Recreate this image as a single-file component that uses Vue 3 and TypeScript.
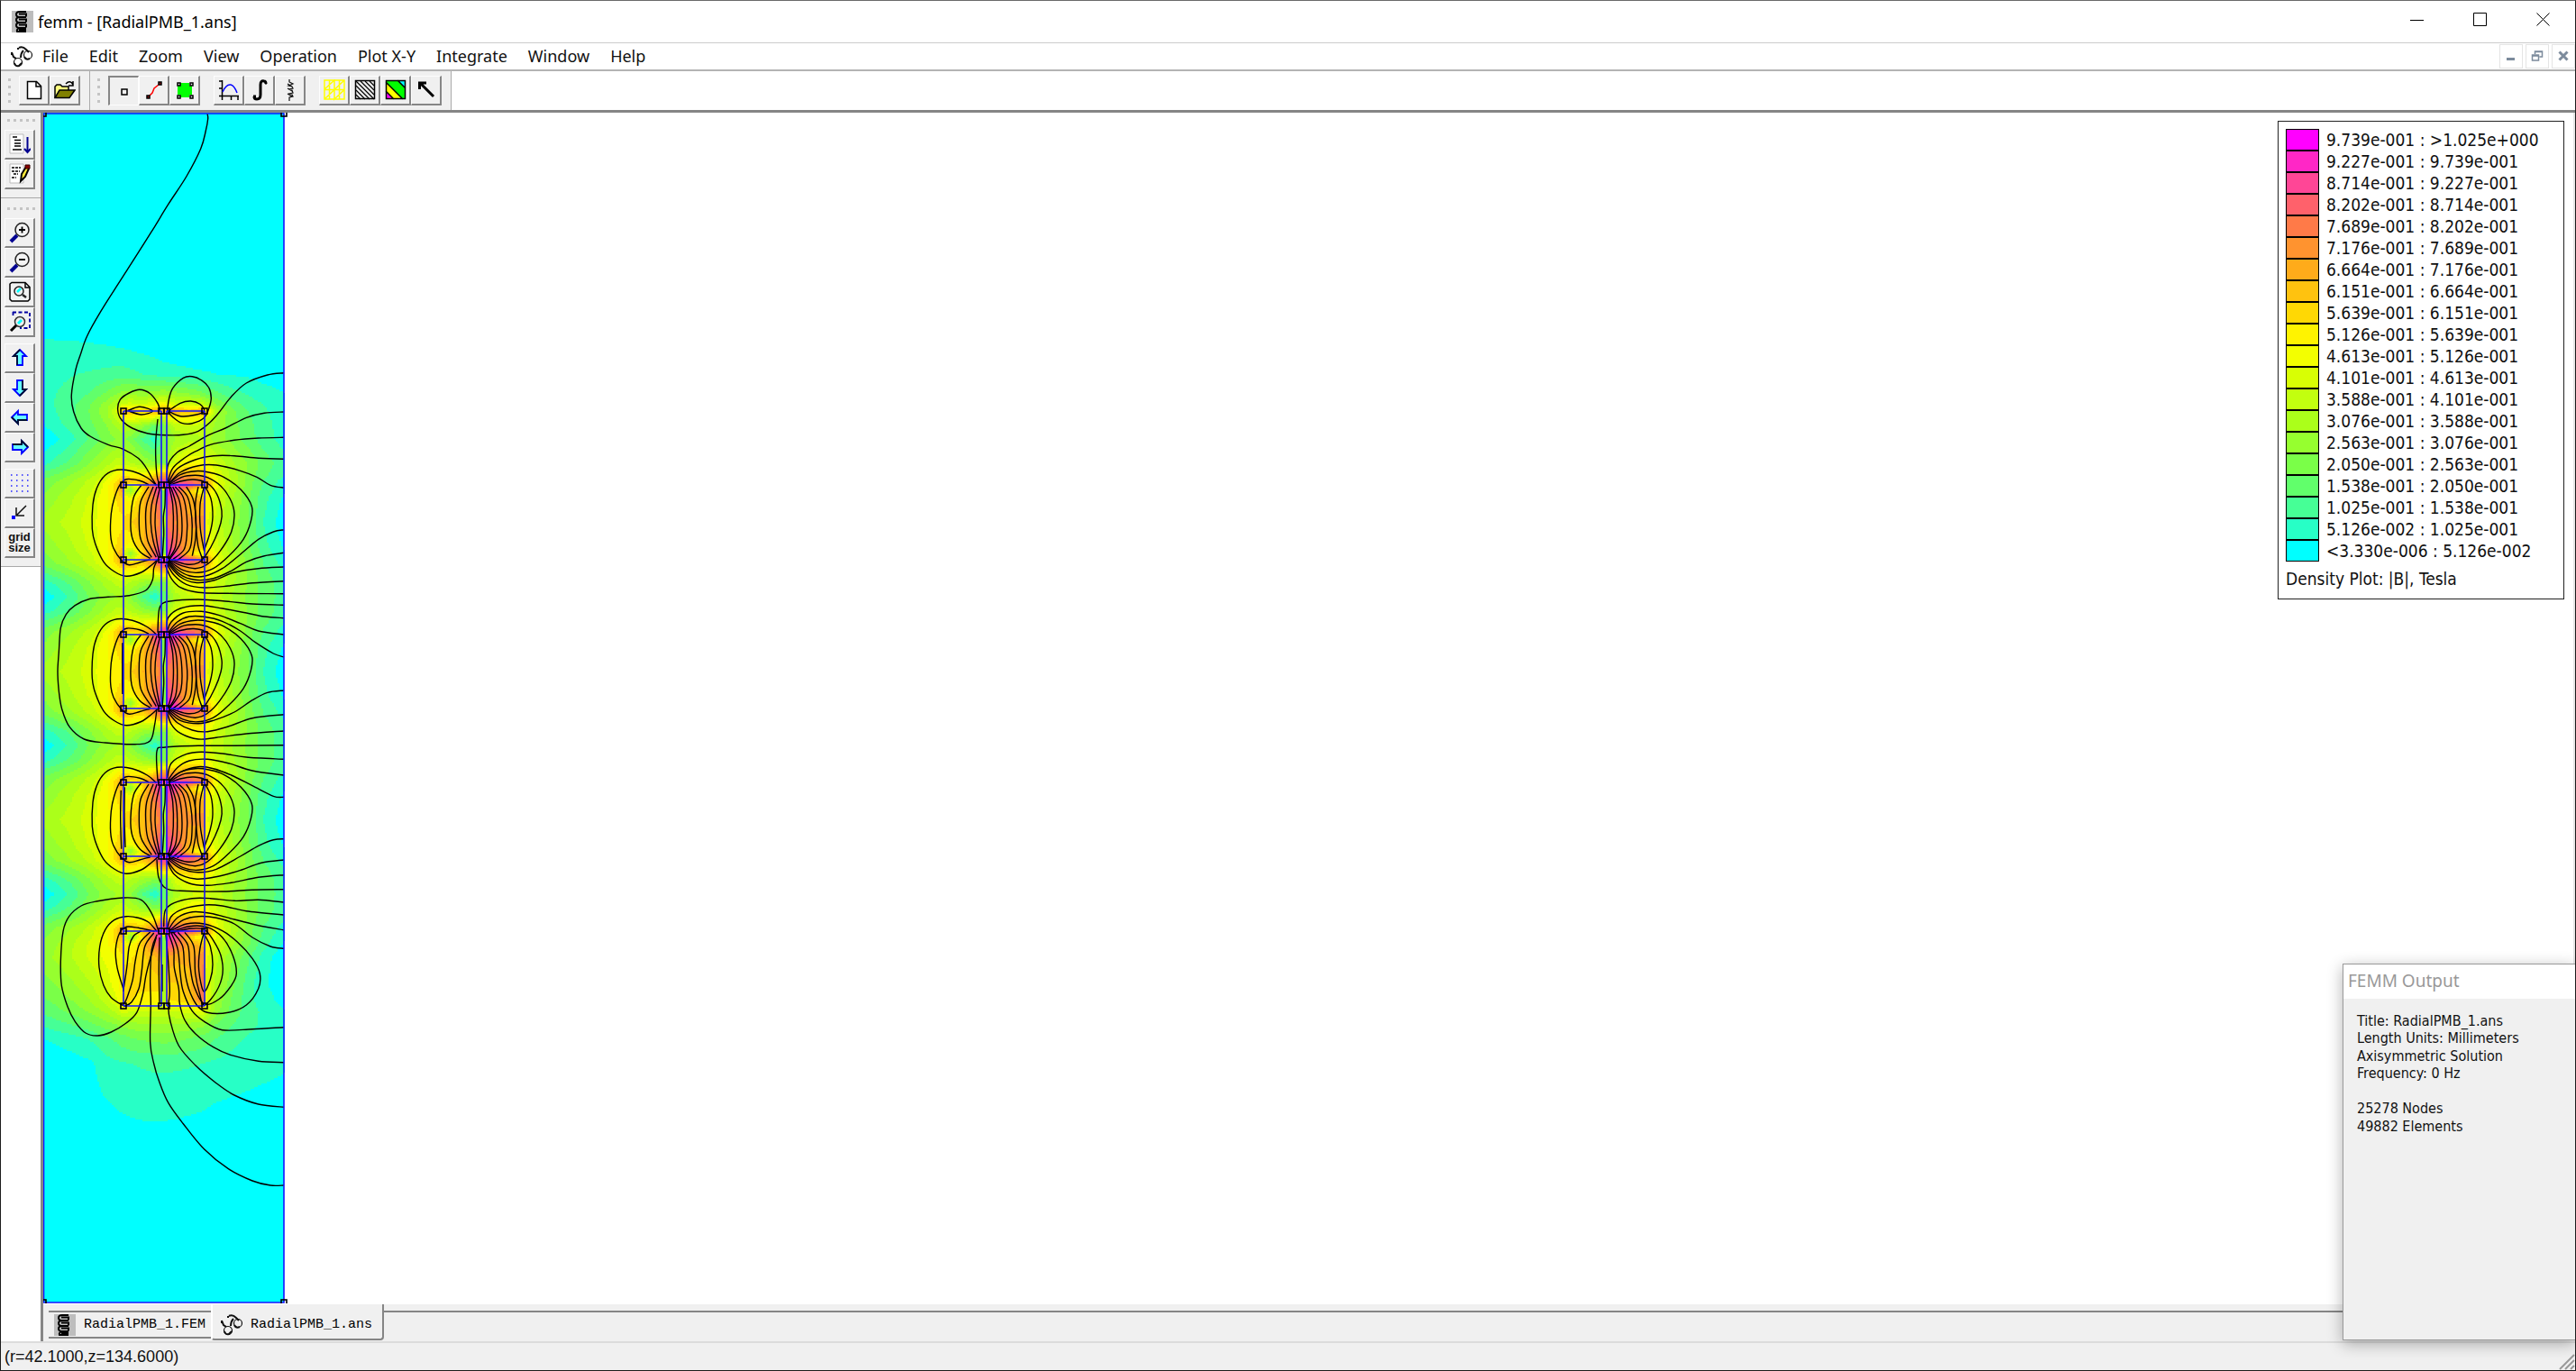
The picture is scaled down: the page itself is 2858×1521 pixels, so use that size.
<script setup lang="ts">
type Point = [number, number]

const menus = ['File', 'Edit', 'Zoom', 'View', 'Operation', 'Plot X-Y', 'Integrate', 'Window', 'Help']

const palette = [
  '#00ffff', '#27ffc6', '#46ff96', '#61ff6b', '#7aff48', '#96ff2f', '#abff1a', '#c2ff0f', '#d8ff04', '#f3ff00',
  '#fff300', '#ffd804', '#ffc20f', '#ffab1a', '#ff932f', '#ff7a48', '#ff616b', '#ff4696', '#ff27c6', '#ff00ff',
]

const ranges = [
  '9.739e-001 : >1.025e+000', '9.227e-001 : 9.739e-001', '8.714e-001 : 9.227e-001', '8.202e-001 : 8.714e-001',
  '7.689e-001 : 8.202e-001', '7.176e-001 : 7.689e-001', '6.664e-001 : 7.176e-001', '6.151e-001 : 6.664e-001',
  '5.639e-001 : 6.151e-001', '5.126e-001 : 5.639e-001', '4.613e-001 : 5.126e-001', '4.101e-001 : 4.613e-001',
  '3.588e-001 : 4.101e-001', '3.076e-001 : 3.588e-001', '2.563e-001 : 3.076e-001', '2.050e-001 : 2.563e-001',
  '1.538e-001 : 2.050e-001', '1.025e-001 : 1.538e-001', '5.126e-002 : 1.025e-001', '<3.330e-006 : 5.126e-002',
]
const legend = ranges.map((text, i) => ({ text, color: palette[19 - i] }))

const output = [
  'Title: RadialPMB_1.ans', 'Length Units: Millimeters', 'Axisymmetric Solution', 'Frequency: 0 Hz', '\u00a0',
  '25278 Nodes', '49882 Elements',
]

/* ---- Flux density: sampled band levels, interpolated between the samples ---- */
const xs = [48, 60, 80, 100, 118, 130, 136, 138, 145, 158, 172, 178, 179, 184, 185, 195, 210, 226, 228, 240, 258, 275, 292, 316]
type Row = [number, number[]]

const aboveRows: Row[] = [
  [-41, [0.3, 1.0, 2.4, 4.2, 5.5, 6, 6, 6, 5, 3, 1.2, 2.5, 3.5, 3.5, 4.5, 6.5, 7.8, 8.3, 8.2, 7.6, 6, 4.8, 3.6, 2.5]],
  [-25, [1.6, 2.2, 3.4, 5, 6.5, 7.5, 7.6, 7.6, 7, 6, 5, 5, 5, 5, 6, 8.5, 10, 10, 9.5, 8, 6.2, 4.9, 3.6, 2.4]],
  [-12, [3.4, 3.9, 5, 6.4, 8.1, 9.8, 10.5, 10.5, 10.3, 9.8, 11, 13, 13, 13, 13, 12.8, 13.2, 12, 11.5, 9, 6.5, 4.8, 3.3, 2]],
  [-4, [4.3, 4.9, 6, 7.4, 9.2, 11.5, 13.5, 13.5, 12.5, 12, 15, 18, 18, 18, 18, 17, 16.2, 15.5, 14, 9.4, 6.6, 4.6, 2.9, 1.5]],
]
const insideRows: Row[] = [
  [0, [4.5, 5.1, 6.2, 7.5, 9.4, 12, 15.5, 12, 8, 12, 17, 19.5, 18, 18, 19.5, 19, 17, 14, 15, 9.4, 6.6, 4.6, 2.9, 1.4]],
  [6, [4.8, 5.4, 6.5, 7.8, 9.6, 12, 13.5, 8, 5, 11, 16.5, 19, 5, 5, 19, 17.5, 12, 8.5, 12, 8.9, 6.4, 4.4, 2.7, 1.1]],
  [14, [5.2, 5.8, 6.9, 8.2, 9.8, 11.2, 12, 10, 9.6, 12.3, 15.6, 17.2, 4, 4, 18, 16, 13.5, 12.5, 10.4, 8.4, 6.1, 4.2, 2.4, 0.8]],
  [41, [6.3, 6.8, 7.5, 8.6, 9.7, 10.4, 10.6, 11.4, 11.9, 12.9, 14.3, 15.2, 6.5, 6.5, 15.6, 14.9, 14.1, 14.6, 9.3, 7.6, 5.6, 4, 2, 0.2]],
]
const mirror = (rows: Row[]): Row[] => [...rows].reverse().map(([y, v]): Row => [82 - y, v])
const cell = [...aboveRows, ...insideRows, ...mirror(insideRows).slice(1), ...mirror(aboveRows)]
const place = (rows: Row[], top: number): Row[] => rows.map(([y, v]): Row => [y + top, v])
const flat = (n: number) => xs.map(() => n)

const rows: Row[] = [
  [120, flat(0)],
  [355, flat(0)],
  [377, [1.02, 1, 0.97, 0.9, 0.75, 0.6, 0.5, 0.5, 0.4, 0.3, 0.2, 0.2, 0.2, 0.2, 0.2, 0.2, 0.1, 0, 0, 0, 0, 0, 0, 0]],
  [415, [1.7, 1.8, 1.95, 2.1, 2.3, 2.4, 2.4, 2.4, 2.3, 2, 1.7, 1.5, 1.5, 1.4, 1.4, 1.3, 1.2, 1.1, 1.1, 1, 0.9, 0.8, 0.6, 0.5]],
  [437, [1.8, 1.95, 2.3, 3.1, 4.2, 5, 5.4, 5.4, 5.6, 5.5, 5.5, 5.8, 5.8, 5.8, 5.7, 5.4, 5, 4.2, 4, 3.3, 2.4, 1.9, 1.4, 1]],
  [449, [1.6, 2, 2.7, 4, 5.5, 7, 8.3, 8.5, 8.5, 8, 9, 10, 10, 10, 9.5, 8.5, 8.3, 7.5, 7, 5, 3.6, 2.6, 2, 1.2]],
  [456, [1.4, 1.9, 2.8, 4.1, 5.7, 8.5, 13, 14, 12, 11.5, 13, 15, 14, 14, 15, 13.5, 12.5, 14, 12, 6.4, 4.2, 3, 2.2, 1.3]],
  [463, [1.2, 1.7, 2.7, 4, 5.5, 7.5, 9.5, 10, 10, 9.5, 9, 7.5, 7.5, 8, 10, 10.5, 10.5, 10, 8.5, 6, 4.3, 3.2, 2.3, 1.4]],
  [472, [0.9, 1.5, 2.5, 3.7, 5, 6.3, 6.9, 6.9, 6.6, 5.5, 3.8, 4, 4.5, 4.8, 5.5, 7.5, 8, 7.6, 7, 5.7, 4.4, 3.4, 2.4, 1.5]],
  [487, [0.2, 0.7, 1.7, 3.2, 4.4, 5.1, 5.3, 5.3, 4.5, 2.8, 1.2, 2.6, 4, 4, 4.6, 6, 6.6, 6.8, 6.4, 5.6, 4.6, 3.5, 2.5, 1.5]],
  ...place(cell.slice(1), 538.5),
  ...place(cell, 704),
  ...place(cell, 868.5),
  ...place([...aboveRows, ...insideRows.slice(0, 3)], 1033.5),
  [1062, [5.6, 6.1, 7, 8.2, 9.3, 10.2, 10.8, 10.8, 10.9, 11.6, 12.8, 13.6, 6, 6, 14, 13.2, 13.3, 15, 9.3, 7.3, 5, 3.2, 1.6, 0.1]],
  [1090, [4.6, 5, 5.9, 7, 8.4, 9.8, 10.6, 11.4, 11.4, 11.4, 11.5, 11.5, 6.5, 6.5, 12, 12, 12.7, 15.4, 9, 6.6, 4.3, 2.6, 1.2, 0.2]],
  [1110, [3.8, 4.2, 5, 6, 7.5, 9, 10.6, 12, 11, 10.6, 10.5, 10.3, 7, 7, 11, 11.2, 12, 16, 9.6, 5.8, 3.8, 2.4, 1.5, 0.6]],
  [1122, [3.2, 3.6, 4.3, 5.2, 6.2, 7.4, 8.4, 8.4, 8, 7.9, 7.8, 7.8, 7.8, 7.8, 7.8, 8, 8.4, 9, 8, 5.3, 3.6, 2.5, 1.8, 1]],
  [1137, [2.2, 2.5, 3, 3.7, 4.5, 5, 5.3, 5.3, 5.6, 5.8, 5.9, 5.9, 5.9, 5.9, 5.9, 5.9, 5.7, 5.2, 5, 3.9, 3, 2.3, 1.8, 1.4]],
  [1152, [1, 1.2, 1.6, 2.1, 2.8, 3.3, 3.6, 3.6, 3.9, 4.2, 4.3, 4.4, 4.4, 4.4, 4.4, 4.3, 4, 3.6, 3.5, 3, 2.3, 1.9, 1.7, 1.5]],
  [1180, [0, 0.2, 0.5, 0.8, 1.6, 1.8, 1.9, 1.9, 2, 2.1, 2.2, 2.2, 2.2, 2.2, 2.2, 2.2, 2.1, 2, 1.9, 1.8, 1.6, 1.4, 1.3, 1.1]],
  [1210, [0, 0.1, 0.3, 0.6, 1.2, 1.4, 1.5, 1.5, 1.5, 1.6, 1.6, 1.6, 1.6, 1.6, 1.6, 1.5, 1.5, 1.4, 1.3, 1.2, 1.1, 1, 0.9, 0.8]],
  [1243, [0, 0, 0.1, 0.3, 0.5, 0.8, 0.85, 0.85, 0.95, 1, 1.01, 1.01, 1.01, 1.01, 1, 0.98, 0.9, 0.8, 0.8, 0.7, 0.6, 0.5, 0.4, 0.3]],
  [1262, flat(0)],
  [1460, flat(0)],
]

function find(list: number[], v: number): [number, number] {
  let i = 0
  while (i < list.length - 2 && v >= list[i + 1]) i++
  return [i, (v - list[i]) / (list[i + 1] - list[i])]
}

const bands = (() => {
  const step = 2
  const paths = palette.map(() => '')
  const ys = rows.map((r) => r[0])
  const lookup: [number, number][] = []
  for (let x = 48; x < 315; x += step) lookup.push(find(xs, x + 1))
  for (let y = 126; y < 1445; y += step) {
    const [j, ty] = find(ys, y + 1)
    let start = 0
    let previous = -1
    for (let k = 0; k <= lookup.length; k++) {
      let band = -2
      if (k < lookup.length) {
        const [i, tx] = lookup[k]
        const a = rows[j][1][i] * (1 - tx) + rows[j][1][i + 1] * tx
        const b = rows[j + 1][1][i] * (1 - tx) + rows[j + 1][1][i + 1] * tx
        band = Math.max(0, Math.min(19, Math.floor(a * (1 - ty) + b * ty)))
      }
      if (band !== previous) {
        if (previous > 0) paths[previous] += `M${48 + start * step} ${y}h${(k - start) * step}v2h-${(k - start) * step}z`
        start = k
        previous = band
      }
    }
  }
  return paths.map((d, i) => ({ d, color: palette[i] })).filter((b) => b.d)
})()

/* ---- Flux lines: polylines at three units per pixel, from a top offset ---- */
function parse(text: string): Point[] {
  return text.split(' ').map((pair) => pair.split(',').map(Number) as Point)
}
function curve(text: string, top: number): string {
  const p = parse(text).map(([x, y]): Point => [40 + x / 3, top + y / 3])
  let d = `M${p[0][0].toFixed(1)} ${p[0][1].toFixed(1)}`
  for (let i = 0; i < p.length - 1; i++) {
    const a = p[Math.max(0, i - 1)]
    const b = p[i]
    const c = p[i + 1]
    const e = p[Math.min(p.length - 1, i + 2)]
    const n = [b[0] + (c[0] - a[0]) / 6, b[1] + (c[1] - a[1]) / 6, c[0] - (e[0] - b[0]) / 6, c[1] - (e[1] - b[1]) / 6, c[0], c[1]]
    d += 'C' + n.map((v) => v.toFixed(1)).join(' ')
  }
  return d
}

const magnetLines = [
  '400,535 370,510 320,488 270,484 230,502 202,545 189,600 187,680 197,730 225,790 260,822 300,838 350,825 385,800 405,782',
  '375,533 345,520 300,515 278,535 260,580 250,630 248,700 258,745 285,785 310,800 345,792 380,782',
  '350,535 325,575 315,650 320,710 345,755 380,778',
  '375,540 348,590 343,660 350,720 385,775',
  '390,540 368,600 365,660 372,720 400,775',
  '402,540 385,600 382,660 390,720 407,775',
  '412,545 400,600 396,660 402,720 413,775',
  '430,545 429,600 424,640 425,700 420,780',
  '443,540 455,600 457,680 450,740 438,780',
  '448,540 466,600 470,680 464,740 442,780',
  '455,540 478,590 486,670 479,730 446,780',
  '463,540 490,575 502,640 502,700 492,750 455,782',
  '475,540 505,575 518,640 519,700 510,750 470,785',
  '500,540 522,580 532,640 531,710 520,770',
  '540,540 530,600 534,690 540,740 552,775',
  '558,545 546,600 547,680 560,755',
  '560,535 582,580 588,640 580,690 560,750',
  '445,535 480,522 525,516 570,528 602,565 618,620 615,660 595,715 565,768 540,793 500,798 450,782',
  '443,533 485,508 530,502 570,509 615,538 647,583 660,630 650,690 612,755 570,798 530,812 485,803 445,784',
  '441,531 480,500 530,488 575,492 625,508 682,550 718,605 715,655 690,715 640,772 590,812 540,826 490,818 443,786',
]

const traces: [number, string[]][] = [
  [120, ['570,18 572,35 565,75 548,135 500,228 440,320 385,410 328,500 272,587 215,677 170,758 148,820 132,870 118,955 125,1010 150,1065 180,1092 240,1120 290,1135 340,1165 365,1195 385,1230 400,1255']],
  [360, [
    '412,285 405,262 380,230 345,217 310,228 280,250 272,285 285,318 320,345 370,362 430,368 490,367 540,355 580,325 610,292 650,240 700,195 770,168 825,161',
    '437,288 442,250 455,212 490,178 520,173 550,185 575,210 583,245 575,280 560,310 520,329 485,328 455,308 437,288',
    '305,287 345,274 388,288 350,300 305,287',
    '440,288 480,262 515,255 545,265 560,288 530,301 480,305 440,288',
    '405,315 398,400 402,500 412,535',
    '435,520 440,465 470,425 510,405 570,370 630,345 700,310 760,295 825,291',
    '438,525 455,478 500,440 540,418 580,400 660,385 740,378 825,376',
    '440,528 470,480 530,450 590,437 660,437 740,445 825,448',
    '442,530 480,492 540,470 600,468 680,487 735,508 780,535 825,543',
    '440,785 470,815 510,836 560,838 620,812 680,765 740,715 790,690 825,683',
    '438,788 480,832 530,850 590,845 650,820 700,790 760,770 825,760',
  ]],
  [630, [
    '436,-18 480,30 530,49 590,42 660,15 740,2 825,-3',
    '436,-12 460,25 500,55 560,66 640,60 720,50 825,44',
    '430,-10 450,35 480,65 540,82 640,85 825,86',
    '405,215 408,150 415,125 440,112 540,105 640,112 720,120 825,124',
    '435,205 440,165 480,135 550,125 620,135 700,150 760,162 825,167',
    '437,210 450,180 490,150 550,145 610,158 680,185 740,210 825,222',
    '440,215 470,180 510,162 560,163 620,178 680,210 730,248 790,285 825,297',
    '405,-28 392,0 388,40 365,75 310,92 240,97 180,103 130,125 100,155 82,200 76,280 72,345 76,410 86,470 112,530 160,570 230,582 330,587 380,575 395,520 402,470',
    '288,250 287,335 288,420',
    '289,250 289,335 289,420',
    '440,475 480,508 540,518 590,508 660,480 720,440 770,415 825,408',
    '438,478 470,515 520,540 570,545 640,528 720,500 825,488',
    '436,480 450,520 480,550 540,570 600,565 700,552 825,543',
    '405,710 402,610 430,597 540,592 660,592 825,590',
    '437,700 450,650 500,620 550,613 620,618 700,630 825,637',
    '440,705 470,665 510,642 570,637 640,650 720,675 825,690',
  ]],
  [840, [
    '442,80 480,50 540,32 590,38 650,60 720,95 790,130 825,133',
    '283,110 281,200 284,305', '295,100 294,200 297,300',
    '440,340 480,370 540,383 600,373 680,330 740,295 790,275 825,272',
    '438,345 470,385 530,405 590,400 670,380 750,352 825,342',
    '437,348 460,390 510,420 570,427 650,418 740,400 825,392',
    '402,340 408,400 430,435 480,445 620,447 720,442 825,440',
    '425,565 430,510 460,485 520,470 580,470 660,478 740,475 825,483',
    '437,570 450,530 490,505 560,492 620,495 700,512 825,525',
    '440,575 470,535 520,515 580,520 660,540 740,560 825,575',
    '408,580 385,520 350,475 290,468 200,480 150,495 110,530 90,580 82,680 85,760 105,830 130,880 165,918 205,927 250,915 300,885 335,850 355,790 365,730 380,670 400,600',
  ]],
  [1000, [
    '443,98 490,62 540,50 600,55 660,75 720,120 780,150 825,157',
    '402,100 375,70 340,55 300,50 260,62 230,95 212,150 210,220 225,280 250,320 290,347',
    '395,100 340,88 300,85 278,105 265,160 270,220 290,290',
    '350,98 325,115 310,150 302,220 290,300',
    '380,102 345,140 330,200 322,260 303,320 290,347',
    '392,105 362,150 352,230 342,290 318,335 292,350',
    '403,110 385,160 380,260 382,340 380,470 392,540 410,600 440,670 490,740 560,825 640,890 720,930 780,945 825,945',
    '411,120 409,230 411,340', '420,210 420,300',
    '432,110 440,200 445,300 440,350 447,400 475,480 530,545 600,605 660,645 740,675 825,685',
    '442,110 458,160 460,220 475,290 478,340 495,395 530,440 590,485 650,512 740,532 825,536',
    '450,105 472,160 480,240 490,300 520,365 560,400 620,428 720,425 825,419',
    '458,105 488,150 495,230 508,290 535,345 570,370 640,370 700,345 740,290 745,240 720,190 670,135 620,98 560,75 500,75 445,100',
    '472,103 505,145 512,210 525,280 560,342 610,325 650,280 667,240 655,180 620,120 570,86 510,83 447,103',
    '495,103 525,150 530,240 545,310 560,345 600,300 621,240 615,180 590,130 560,94 510,91 450,105',
    '560,100 545,160 542,230 558,300 580,260 588,210 580,150 560,110',
  ]],
]

const fluxLines = [
  ...traces.flatMap(([top, list]) => list.map((t) => curve(t, top))),
  ...[360, 525.5, 690].flatMap((top) => magnetLines.map((t) => curve(t, top))),
]

const levelsY = [456, 538, 621, 704, 786, 868, 950, 1033, 1116]
const columnsX = [137, 179, 185, 227]
const nodes: Point[] = [
  ...levelsY.flatMap((y) => columnsX.map((x): Point => [x, y])),
  [48, 126], [315, 126], [48, 1445], [315, 1445],
]
</script>

<template>
  <div class="app">
    <header class="titlebar">
      <svg class="icon coil" viewBox="0 0 24 24" aria-hidden="true">
        <path d="M0 0h24v24H0z" fill="#bdbdbd" />
        <path d="M16 1H9Q5 1 5 4t4 3h7M9 7Q5 7 5 10t4 3h7M9 13Q5 13 5 16t4 3h7M9 19q-4 1-3 4h10M8 3.500h8v3M8 9.500h8v3M8 15.500h8v3M8 21h8" fill="none" stroke="#000" stroke-width="2" />
      </svg>
      <h1>femm - [RadialPMB_1.ans]</h1>
      <div class="window-buttons">
        <button type="button" aria-label="Minimize"><svg viewBox="0 0 16 16"><path d="M0 8.500h15" /></svg></button>
        <button type="button" aria-label="Maximize"><svg viewBox="0 0 16 16"><path d="M.5.5h14v14H.5z" /></svg></button>
        <button type="button" aria-label="Close"><svg viewBox="0 0 16 16"><path d="M.5.500l14 14m0-14l-14 14" /></svg></button>
      </div>
    </header>

    <nav class="menubar">
      <svg class="icon" viewBox="0 0 24 24" aria-hidden="true">
        <g fill="none" stroke="#111" stroke-width="2">
          <path d="M1 7l2 5 3 2M1 7v3M9 2q4-2 8 2l3 3M8 2v2M14 5q-3 3-3 8" />
          <circle cx="8" cy="18" r="4.500" stroke-width="1.200" /><circle cx="19" cy="10" r="4.500" stroke-width="1.200" />
          <path d="M4 19q1 4 5 3l3-3M15 12q2 4 6 2" />
        </g>
      </svg>
      <button v-for="m in menus" :key="m" type="button" class="menu">{{ m }}</button>
      <div class="mdi-buttons">
        <button type="button" aria-label="Minimize document"><svg viewBox="0 0 14 14"><path d="M2 10.500h9" stroke-width="3" /></svg></button>
        <button type="button" aria-label="Restore document"><svg viewBox="0 0 14 14"><path d="M1.500 6h7v6h-7zM1 7h8M4.500 5V2h8v6h-3M4 2.500h9" stroke-width="1.500" /></svg></button>
        <button type="button" aria-label="Close document"><svg viewBox="0 0 14 14"><path d="M2.500 2.500l9 9m0-9l-9 9" stroke-width="3" /></svg></button>
      </div>
    </nav>

    <div class="toolbars">
      <div class="toolbar">
        <span class="grip" />
        <div class="group">
          <button type="button" class="tool" aria-label="New"><svg viewBox="0 0 24 24"><path d="M4.500 2.500h10l5 5v14h-15z" fill="#fff" stroke="#000" stroke-width="1.500" /><path d="M14 2.500V8h5.500" fill="none" stroke="#000" stroke-width="1.500" /></svg></button>
          <button type="button" class="tool" aria-label="Open"><svg viewBox="0 0 24 24"><path d="M1 20V8l2-2h4l2 2h7v4" fill="#ffff80" stroke="#000" stroke-width="1.500" /><path d="M1 20.500L6 12h17l-6 8.500z" fill="#808000" stroke="#000" stroke-width="1.500" /><path d="M13 5q5-5 8 1m0-4v5h-5" fill="none" stroke="#000" stroke-width="1.500" /></svg></button>
        </div>
      </div>
      <div class="toolbar main-tools">
        <span class="grip" />
        <div class="group">
          <button type="button" class="tool pressed" aria-label="Point mode"><svg viewBox="0 0 24 24"><path d="M9 10h6v6H9z" fill="none" stroke="#000" stroke-width="1.500" /></svg></button>
          <button type="button" class="tool" aria-label="Contour mode"><svg viewBox="0 0 24 24"><path d="M7 18l3-3 2-5 5-4" fill="none" stroke="#f00" stroke-width="1.500" /><path d="M4 18h3v3H4zM17 3h3v3h-3z" fill="#a00" stroke="#000" stroke-width="1.500" /></svg></button>
          <button type="button" class="tool" aria-label="Area mode"><svg viewBox="0 0 24 24"><path d="M7 4h10v3h3v10h-3v3H7v-3H4V7h3z" fill="#0f0" /><path d="M4 4h3v3H4zM18 4h3v3h-3zM4 18h3v3H4zM18 18h3v3h-3z" fill="#eee" stroke="#000" stroke-width="1.500" /></svg></button>
        </div>
        <div class="group">
          <button type="button" class="tool" aria-label="Plot along contour"><svg viewBox="0 0 24 24"><path d="M4.500 1v22M1 2h4M1 10h4M1 18.500h22M14.500 19v4M22 19v4" fill="none" stroke="#000" stroke-width="1.500" /><path d="M5 14q4-9 9-8 4 1 7 9" fill="none" stroke="#00f" stroke-width="1.500" /></svg></button>
          <button type="button" class="tool" aria-label="Integrate"><svg viewBox="0 0 24 24"><path d="M19 5q0-3-2-3-4-1-4 4v11q0 5-4 5-3 0-3-3" fill="none" stroke="#000" stroke-width="3" /><path d="M18 4h2M5 19h3" fill="none" stroke="#000" stroke-width="3" /></svg></button>
          <button type="button" class="tool" aria-label="Circuit properties"><svg viewBox="0 0 24 24"><path d="M11 0v3l4 2-5 2 4 1 1 2-5 1 4 1 1 3-5 1 4 1 1 2-4 1v4M9 5l5 3M9 10l5 3M9 16l5 3" fill="none" stroke="#111" stroke-width="1.200" /></svg></button>
        </div>
        <div class="group">
          <button type="button" class="tool" aria-label="Show mesh"><svg viewBox="0 0 24 24"><path d="M1 1h22v21H1zM12 1v21M1 11.500h22M1 11L12 1v10.500L23 1M1 22l11-10.500V22l11-10.500M6.500 1v21M17.500 1v21" fill="none" stroke="#ff0" stroke-width="1.500" /></svg></button>
          <button type="button" class="tool" aria-label="Contour plot"><svg viewBox="0 0 24 24"><path d="M1.500 1.500h21v20h-21z" fill="#eee" stroke="#000" stroke-width="1.500" /><path d="M2 17l5 5M2 12l10 10M2 7l15 15M2 2l20 20M7 2l15 15M12 2l10 10M17 2l5 5" stroke="#000" stroke-width="1.200" /></svg></button>
          <button type="button" class="tool" aria-label="Density plot"><svg viewBox="0 0 24 24"><path d="M1 1h22v21H1z" fill="#0f0" /><path d="M1 3l19 19H10L1 13z" fill="#ff0" /><path d="M1 13l9 9H1z" fill="#f0f" /><path d="M14 1h9v9z" fill="#0ff" /><path d="M1.500 1.500h21v20h-21zM1 3l19 19M1 13l9 9M14 1l9 9" fill="none" stroke="#000" stroke-width="1.500" /></svg></button>
          <button type="button" class="tool" aria-label="Vector plot"><svg viewBox="0 0 24 24"><path d="M5 4l15 15M4.500 11V4H12" fill="none" stroke="#000" stroke-width="3" /></svg></button>
        </div>
      </div>
    </div>

    <main class="workspace">
      <aside class="sidebar">
        <div class="side-tools">
          <div class="side-section">
            <span class="side-grip" />
            <div class="side-group">
              <button type="button" class="tool" aria-label="Output window"><svg viewBox="0 0 24 24"><path d="M1 1h15v21H1z" fill="#fff" stroke="#bbb" /><path d="M4 4h5M6 7.500h7M6 11h7M6 14h7M4 18h10" stroke="#000" stroke-width="1.500" /><path d="M20.500 4v16M17 17l3.500 4 3.500-4" fill="none" stroke="#000090" stroke-width="2" /></svg></button>
              <button type="button" class="tool" aria-label="Lua console"><svg viewBox="0 0 24 24"><path d="M1 1h15v21H1z" fill="#fff" stroke="#bbb" /><path d="M3 5h10M3 9h9M5 12h5M3 16h5" stroke="#000" stroke-width="1.500" stroke-dasharray="3 1" /><path d="M13 20l1-8 5-8 3 2-4 9z" fill="#ffeb3b" stroke="#000" stroke-width="2" /><path d="M18 2h5v4h-5z" fill="#8b0000" stroke="#300" /></svg></button>
            </div>
          </div>
          <div class="side-section">
            <span class="side-grip" />
            <div class="side-group">
              <button type="button" class="tool" aria-label="Zoom in"><svg viewBox="0 0 24 24"><path d="M2 22l7-7" stroke="#000090" stroke-width="4" /><circle cx="14.500" cy="9" r="7.500" fill="#f4f4f4" stroke="#222" stroke-width="1.500" /><path d="M11 9h7M14.500 5.500v7" stroke="#000" stroke-width="1.800" /></svg></button>
              <button type="button" class="tool" aria-label="Zoom out"><svg viewBox="0 0 24 24"><path d="M2 22l7-7" stroke="#000090" stroke-width="4" /><circle cx="14.500" cy="9" r="7.500" fill="#f4f4f4" stroke="#222" stroke-width="1.500" /><path d="M11 9h7" stroke="#000" stroke-width="1.800" /></svg></button>
              <button type="button" class="tool" aria-label="Natural zoom"><svg viewBox="0 0 24 24"><path d="M3 1.500h15l5 5V20l-2 2H3l-2-2V3z" fill="#f2f2f2" stroke="#000" stroke-width="1.500" /><path d="M18 2v5h5" fill="none" stroke="#000" stroke-width="1.500" /><circle cx="11" cy="11" r="5" fill="#eee" stroke="#222" stroke-width="1.500" /><path d="M9 12l4-4" stroke="#0ff" stroke-width="2.500" /><path d="M15 15l4 3" stroke="#222" stroke-width="2.500" /></svg></button>
              <button type="button" class="tool" aria-label="Zoom window"><svg viewBox="0 0 24 24"><path d="M4 1.500h19V19H12M4.500 1v5" fill="none" stroke="#0000a0" stroke-width="1.800" stroke-dasharray="4 2.500" /><circle cx="12" cy="12" r="5.500" fill="#eee" stroke="#333" stroke-width="1.500" /><path d="M10 14l4-4" stroke="#0ff" stroke-width="3" /><path d="M2 22l6-6" stroke="#000" stroke-width="3" /></svg></button>
            </div>
            <div class="side-group">
              <button v-for="(turn, name) in { up: 0, down: 180, left: 270, right: 90 }" :key="name" type="button" class="tool" :aria-label="'Pan ' + name">
                <svg viewBox="0 0 24 24"><g :transform="`rotate(${turn} 12 12)`"><path d="M12 3l7 7h-4v10H9V10H5z" fill="#6ff" stroke="#00f" stroke-width="1.800" /><path d="M12 3l-7 7h4v10" fill="none" stroke="#001030" stroke-width="1.800" /></g></svg>
              </button>
            </div>
            <div class="side-group">
              <button type="button" class="tool" aria-label="Show grid"><svg viewBox="0 0 24 24"><path d="M2 3h20M2 9h20M2 15h20M2 21h20" stroke="#22f" stroke-width="1.500" stroke-dasharray="1.500 4.500" /></svg></button>
              <button type="button" class="tool" aria-label="Snap to grid"><svg viewBox="0 0 24 24"><path d="M19 4L9 14M8 6v9h9" fill="none" stroke="#111" stroke-width="1.500" /><path d="M3 15h4v4H3z" fill="#00f" /></svg></button>
              <button type="button" class="tool grid-size">grid<br />size</button>
            </div>
          </div>
        </div>
      </aside>

      <section class="document">
        <div class="view">
          <svg class="plot" viewBox="48 125 272 1321" role="img" aria-label="Flux density plot">
            <path d="M48 125h267v1320H48z" fill="#0ff" />
            <g shape-rendering="crispEdges">
              <path v-for="b in bands" :key="b.color" :d="b.d" :fill="b.color" />
            </g>
            <g class="flux"><path v-for="(d, i) in fluxLines" :key="i" :d="d" /></g>
            <g class="geometry">
              <path d="M48.500 126H315V1445H48.500z" />
              <path v-for="x in columnsX" :key="x" :d="`M${x} 456V1116`" />
              <path v-for="y in levelsY" :key="y" :d="`M137 ${y}h42M185 ${y}h42`" />
            </g>
            <g class="nodes"><rect v-for="([x, y], i) in nodes" :key="i" :x="x - 3" :y="y - 3" width="6" height="6" /></g>
          </svg>
          <div class="legend">
            <ul>
              <li v-for="row in legend" :key="row.text">
                <span class="swatch" :style="{ background: row.color }" />{{ row.text }}
              </li>
            </ul>
            <p>Density Plot: |B|, Tesla</p>
          </div>
        </div>
        <div class="tabs">
          <button type="button" class="tab">
            <svg class="icon" viewBox="0 0 24 24" aria-hidden="true">
              <path d="M0 0h24v24H0z" fill="#bdbdbd" />
              <path d="M16 1H9Q5 1 5 4t4 3h7M9 7Q5 7 5 10t4 3h7M9 13Q5 13 5 16t4 3h7M9 19q-4 1-3 4h10M8 3.500h8v3M8 9.500h8v3M8 15.500h8v3M8 21h8" fill="none" stroke="#000" stroke-width="2" />
            </svg>
            RadialPMB_1.FEM
          </button>
          <button type="button" class="tab current">
            <svg class="icon" viewBox="0 0 24 24" aria-hidden="true">
              <g fill="none" stroke="#111" stroke-width="2">
                <path d="M1 7l2 5 3 2M1 7v3M9 2q4-2 8 2l3 3M8 2v2M14 5q-3 3-3 8" />
                <circle cx="8" cy="18" r="4.500" stroke-width="1.200" /><circle cx="19" cy="10" r="4.500" stroke-width="1.200" />
                <path d="M4 19q1 4 5 3l3-3M15 12q2 4 6 2" />
              </g>
            </svg>
            RadialPMB_1.ans
          </button>
          <span class="tab-rest" />
        </div>
      </section>
    </main>

    <footer class="statusbar">
      <span>(r=42.1000,z=134.6000)</span>
      <svg viewBox="0 0 18 18" aria-hidden="true"><path d="M1 17L17 1M7 17L17 7M13 17l4-4" stroke="#999" stroke-width="2" /></svg>
    </footer>

    <aside class="output">
      <h2>FEMM Output</h2>
      <div class="output-text"><p v-for="(line, i) in output" :key="i">{{ line }}</p></div>
    </aside>
  </div>
</template>

<style>
body {
  margin: 0;
}
</style>

<style scoped>
.app {
  position: relative;
  box-sizing: border-box;
  display: flex;
  flex-direction: column;
  min-height: 100vh;
  overflow: hidden;
  border: 1px solid #1c1c1c;
  border-top-color: #6a6a6a;
  background: #fff;
  color: #111;
  font-family: 'Noto Sans', 'Open Sans', sans-serif;
}
button {
  margin: 0;
  padding: 0;
  border: 0;
  background: none;
  color: inherit;
  font: inherit;
}
h1, h2, p, ul {
  margin: 0;
  padding: 0;
  font-weight: 400;
}
.icon {
  width: 24px;
  height: 24px;
  flex: none;
}
.titlebar {
  display: flex;
  align-items: center;
  height: 46px;
  padding-left: 12px;
  border-bottom: 1px solid #ccc;
}
.titlebar h1 {
  margin-left: 5px;
  font-size: 18px;
  line-height: 28px;
  color: #000;
}
.window-buttons {
  display: flex;
  margin-left: auto;
}
.window-buttons button {
  width: 70px;
  height: 46px;
}
.window-buttons svg {
  width: 16px;
  height: 16px;
  fill: none;
  stroke: #000;
}
.menubar {
  display: flex;
  align-items: center;
  height: 29px;
  padding-left: 11px;
  border-bottom: 2px solid #b4b4b4;
}
.menu {
  margin-right: 1px;
  padding: 0 11px 2px;
  font-size: 18px;
  line-height: 26px;
}
.mdi-buttons {
  display: flex;
  gap: 3px;
  margin-left: auto;
}
.mdi-buttons button {
  width: 26px;
  height: 27px;
  border: 1px solid #e4e4e4;
}
.mdi-buttons svg {
  width: 14px;
  height: 14px;
  fill: none;
  stroke: #7c8b9c;
}
.toolbars {
  display: flex;
  height: 43px;
  border-bottom: 3px solid #858585;
}
.toolbar {
  display: flex;
  align-items: center;
  padding: 0 10px 0 8px;
  border-right: 1px solid #aaa;
  background: #f0f0f0;
}
.grip {
  width: 3px;
  height: 27px;
  margin-right: 9px;
  background: repeating-linear-gradient(#c4c4c4 0 3px, #f0f0f0 3px 8px);
}
.group {
  display: flex;
}
.group + .group {
  margin-left: 15px;
}
.tool {
  box-sizing: border-box;
  display: flex;
  align-items: center;
  justify-content: center;
  width: 34px;
  height: 33px;
  border: solid;
  border-width: 1px 2px 2px 1px;
  border-color: #fdfdfd #868686 #868686 #fdfdfd;
  background: #f0f0f0;
}
.tool.pressed {
  border-width: 2px 1px 1px 2px;
  border-color: #868686 #fdfdfd #fdfdfd #868686;
}
.tool svg {
  width: 24px;
  height: 24px;
}
.workspace {
  display: flex;
  flex: 1;
}
.sidebar {
  width: 44px;
  border-right: 3px solid #868686;
}
.side-tools {
  background: #f0f0f0;
}
.side-section {
  padding: 7px 5px 9px 4px;
  border-bottom: 1px solid #aaa;
}
.side-section + .side-section {
  padding-top: 10px;
}
.side-grip {
  display: block;
  width: 32px;
  height: 3px;
  margin: 0 0 9px 3px;
  background: repeating-linear-gradient(90deg, #c4c4c4 0 3px, #f0f0f0 3px 7px);
}
.side-group + .side-group {
  margin-top: 7px;
}
.grid-size {
  font: bold 13px/12px 'Liberation Sans', sans-serif;
}
.document {
  display: flex;
  flex: 1;
  flex-direction: column;
  min-width: 0;
}
.view {
  position: relative;
  flex: 1;
  border-right: 2px solid #e6e6e6;
}
.plot {
  display: block;
  width: 272px;
}
.flux {
  fill: none;
  stroke: #000;
  stroke-width: 1.4;
}
.geometry {
  fill: none;
  stroke: #1414ff;
  stroke-width: 1.6;
}
.nodes {
  fill: none;
  stroke: #000;
  stroke-width: 1.6;
}
.legend {
  position: absolute;
  top: 9px;
  right: 10px;
  box-sizing: border-box;
  width: 318px;
  padding: 8px 8px 9px;
  border: 1px solid #222;
  background: #fff;
  font-family: 'DejaVu Sans Condensed', 'DejaVu Sans', sans-serif;
  font-size: 19px;
  line-height: 24px;
}
.legend ul {
  list-style: none;
}
.legend li {
  display: flex;
  align-items: center;
  height: 24px;
  white-space: pre;
}
.swatch {
  box-sizing: border-box;
  width: 37px;
  height: 100%;
  margin-right: 8px;
  border: 1px solid #000;
}
.legend p {
  padding: 7px 0 1px;
}
.tabs {
  display: flex;
  height: 41px;
  background: #f0f0f0;
}
.tab {
  box-sizing: border-box;
  display: flex;
  align-items: center;
  gap: 9px;
  height: 31px;
  margin: 7px 0 0 6px;
  padding: 0 6px;
  border: solid #858585;
  border-width: 2px 0;
  background: #f0f0f0;
  font: 15px/20px 'Liberation Mono', monospace;
  color: #000;
}
.tab.current {
  height: 40px;
  margin: 0;
  padding: 8px 11px 0 9px;
  border-width: 0 2px 2px;
  border-left-color: #fff;
  border-radius: 0 0 4px 4px;
}
.tab-rest {
  flex: 1;
  margin-top: 7px;
  border-top: 2px solid #858585;
}
.statusbar {
  display: flex;
  align-items: center;
  justify-content: space-between;
  height: 30px;
  padding-left: 4px;
  border-top: 2px solid #dcdcdc;
  background: #f0f0f0;
  font-family: 'Liberation Sans', Arial, sans-serif;
  font-size: 18px;
}
.statusbar svg {
  align-self: flex-end;
  width: 18px;
  height: 18px;
}
.output {
  position: absolute;
  right: 0;
  bottom: 33px;
  box-sizing: border-box;
  width: 258px;
  height: 418px;
  border: 1px solid #999;
  border-right: 0;
  background: #f0f0f0;
  box-shadow: 0 4px 16px rgba(0, 0, 0, 0.3);
}
.output h2 {
  height: 38px;
  padding-left: 5px;
  background: #fff;
  color: #999;
  font-size: 19px;
  line-height: 36px;
}
.output-text {
  display: grid;
  grid-auto-rows: 1fr;
  height: 136px;
  margin: 15px 0 0 15px;
  font-family: 'DejaVu Sans Condensed', 'DejaVu Sans', sans-serif;
  font-size: 16px;
  line-height: 19px;
}
</style>
